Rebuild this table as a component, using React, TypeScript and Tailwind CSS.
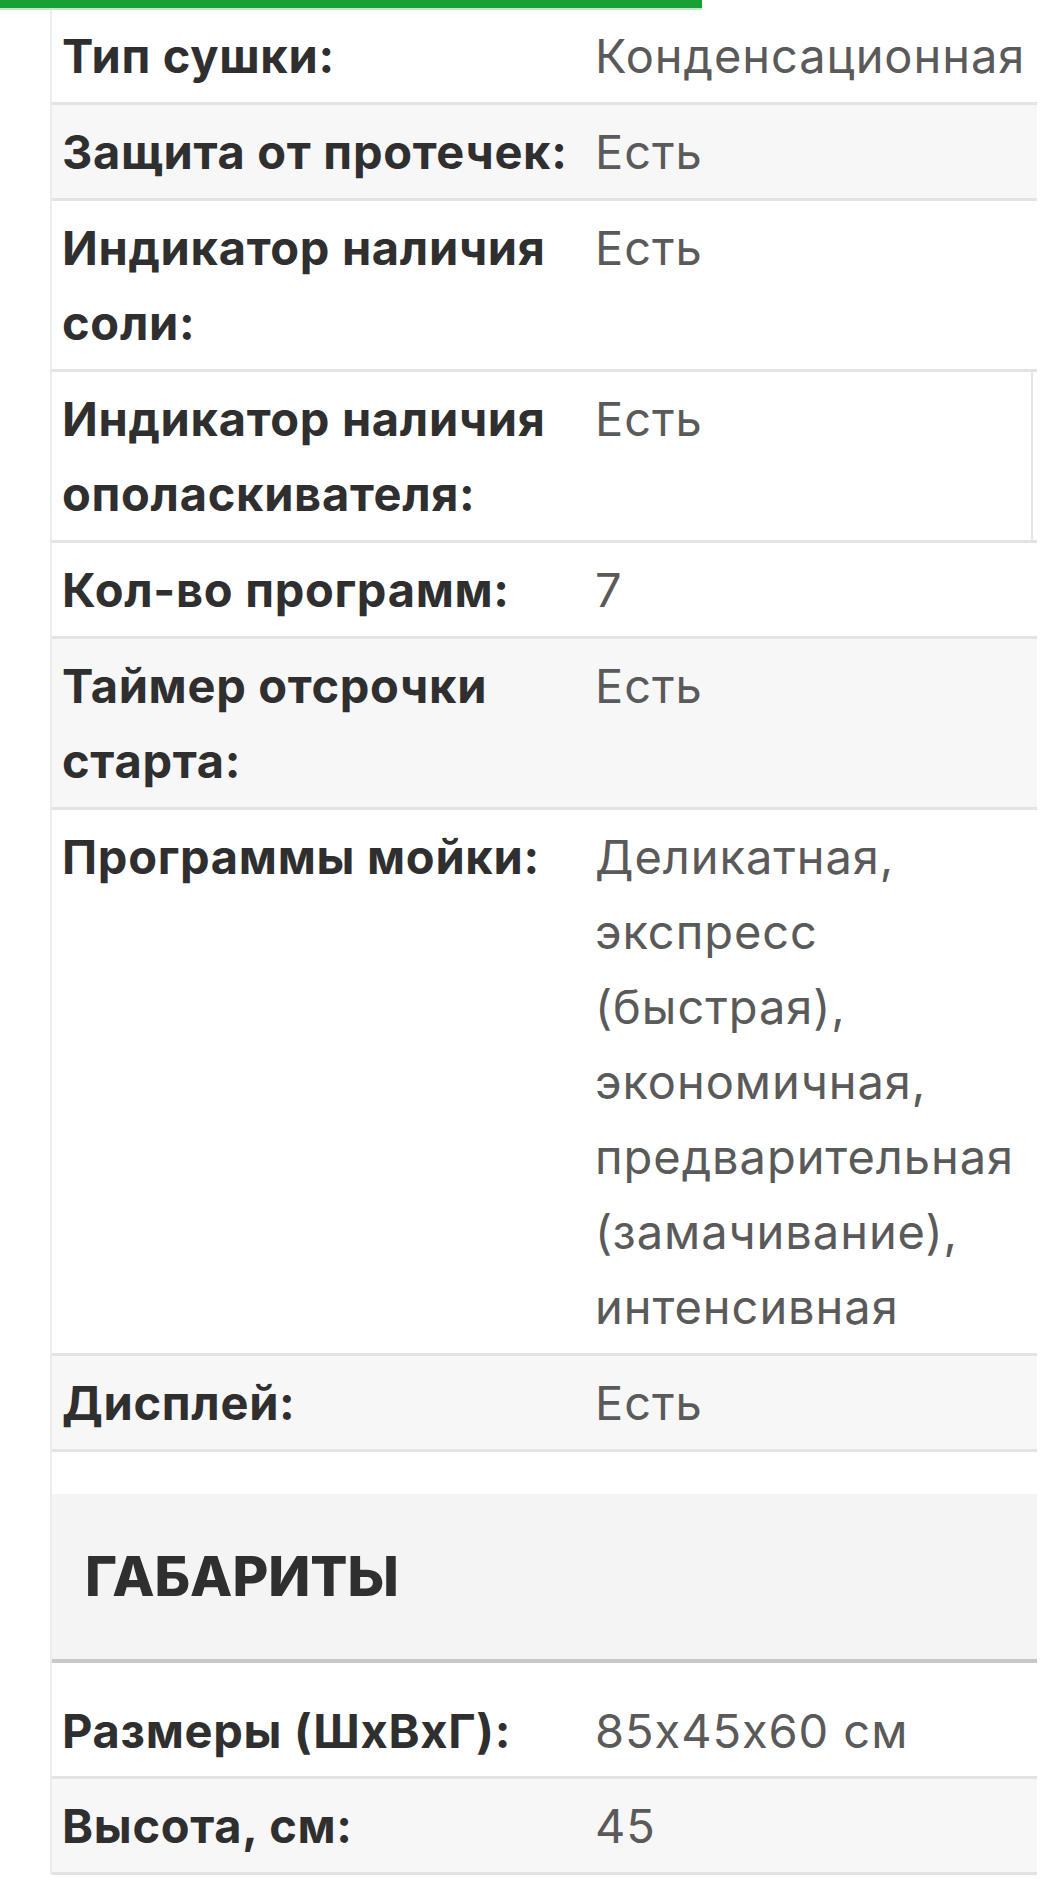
type Spec = {
    label: string[];
    value: string[];
    gray?: boolean;
    edge?: boolean;
    first?: boolean;
    tall?: boolean;
};

const specsTop: Spec[] = [
    { label: ["Тип сушки:"], value: ["Конденсационная"], first: true },
    { label: ["Защита от протечек:"], value: ["Есть"], gray: true },
    { label: ["Индикатор наличия", "соли:"], value: ["Есть"] },
    { label: ["Индикатор наличия", "ополаскивателя:"], value: ["Есть"], edge: true },
    { label: ["Кол-во программ:"], value: ["7"] },
    { label: ["Таймер отсрочки", "старта:"], value: ["Есть"], gray: true },
    {
        label: ["Программы мойки:"],
        value: [
            "Деликатная,",
            "экспресс",
            "(быстрая),",
            "экономичная,",
            "предварительная",
            "(замачивание),",
            "интенсивная",
        ],
    },
    { label: ["Дисплей:"], value: ["Есть"], gray: true },
];

const specsBottom: Spec[] = [
    { label: ["Размеры (ШхВхГ):"], value: ["85x45x60 см"], tall: true },
    { label: ["Высота, см:"], value: ["45"], gray: true },
];

function SpecRow({ spec }: { spec: Spec }) {
    const pad = spec.first ? "pt-[8px] pb-[9px]" : spec.tall ? "pt-[30px] pb-[8px]" : "py-[9px]";
    return (
        <div
            className={`border-b-[3px] border-[#e3e3e3] ${spec.gray ? "bg-[#f7f7f7]" : "bg-white"}`}
        >
            <div className={`flex ${pad} ${spec.edge ? "mr-[4px] border-r-2 border-[#e6e6e6]" : ""}`}>
                <div className="w-[543px] shrink-0 pl-[10px] text-[47px] font-bold leading-[75px] tracking-[0.015em] text-[#2f2f2f]">
                    {spec.label.map((l) => (
                        <div key={l} className="whitespace-nowrap">{l}</div>
                    ))}
                </div>
                <div className="flex-1 text-[47px] font-normal leading-[75px] tracking-[0.02em] text-[#5a5a5a]">
                    {spec.value.map((v) => (
                        <div key={v} className="whitespace-nowrap">{v}</div>
                    ))}
                </div>
            </div>
        </div>
    );
}

export default function App() {
    return (
        <div className="min-h-[1879px] bg-white font-['Inter',sans-serif] [font-feature-settings:'calt'_0]">
            <div className="h-[10px] w-[702px] border-b-2 border-[#bfe8c8] bg-[#17a135]" />
            <div className="ml-[50px] w-[987px] border-l-2 border-[#ececec]">
                {specsTop.map((s) => (
                    <SpecRow key={s.label.join(" ")} spec={s} />
                ))}

                <div className="h-[42px]" />

                <div className="flex h-[169px] items-center border-b-[4px] border-[#c8c8c8] bg-[#f4f4f4] pl-[33px]">
                    <h2 className="text-[55px] font-extrabold uppercase leading-none text-[#2f2f2f]">
                        Габариты
                    </h2>
                </div>

                {specsBottom.map((s) => (
                    <SpecRow key={s.label.join(" ")} spec={s} />
                ))}
            </div>
        </div>
    );
}
